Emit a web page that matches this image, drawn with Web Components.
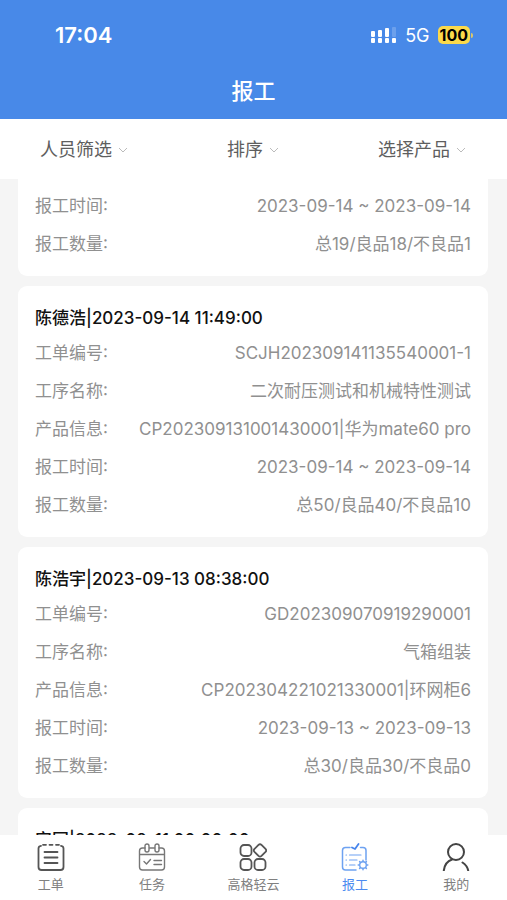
<!DOCTYPE html>
<html lang="zh-CN">
<head>
<meta charset="UTF-8">
<meta name="viewport" content="width=device-width, initial-scale=1.0">
<title>报工</title>
<style>
  :root {
    --blue: #4889e8;
    --page: #f5f5f5;
    --muted: #909090;
  }

  body {
    margin: 0;
    background: var(--page);
    font-family: Inter, "Noto Sans CJK SC", sans-serif;
  }
</style>
</head>
<body>
<report-app>
  <status-bar slot="top" time="17:04" network="5G" battery="100"></status-bar>
  <nav-title slot="top">报工</nav-title>

  <filter-bar slot="filters">
    <filter-select label="人员筛选"></filter-select>
    <filter-select label="排序"></filter-select>
    <filter-select label="选择产品"></filter-select>
  </filter-bar>

  <report-card continued>
    <report-row label="报工时间:">2023-09-14 ~ 2023-09-14</report-row>
    <report-row label="报工数量:">总19/良品18/不良品1</report-row>
  </report-card>

  <report-card heading="陈德浩|2023-09-14 11:49:00">
    <report-row label="工单编号:">SCJH202309141135540001-1</report-row>
    <report-row label="工序名称:">二次耐压测试和机械特性测试</report-row>
    <report-row label="产品信息:">CP202309131001430001|华为mate60 pro</report-row>
    <report-row label="报工时间:">2023-09-14 ~ 2023-09-14</report-row>
    <report-row label="报工数量:">总50/良品40/不良品10</report-row>
  </report-card>

  <report-card heading="陈浩宇|2023-09-13 08:38:00">
    <report-row label="工单编号:">GD202309070919290001</report-row>
    <report-row label="工序名称:">气箱组装</report-row>
    <report-row label="产品信息:">CP202304221021330001|环网柜6</report-row>
    <report-row label="报工时间:">2023-09-13 ~ 2023-09-13</report-row>
    <report-row label="报工数量:">总30/良品30/不良品0</report-row>
  </report-card>

  <report-card heading="安国|2023-09-11 00:00:00"></report-card>

  <tab-bar slot="tabs">
    <tab-item icon="order">工单</tab-item>
    <tab-item icon="task">任务</tab-item>
    <tab-item icon="apps">高格轻云</tab-item>
    <tab-item icon="report" active>报工</tab-item>
    <tab-item icon="user">我的</tab-item>
  </tab-bar>
</report-app>

<script>
const ICONS = {
  order: `
    <g stroke="#555" stroke-width="1.8">
      <path d="M4 2.8C2.4 3 1.5 3.8 1.5 5.5V24c0 2 1 3 3 3h19c2 0 3-1 3-3V5.5c0-1.7-.9-2.5-2.5-2.7"/>
      <path d="M6 1.8h3M12.500 1.800h3M19 1.800h3M7.500 9h13M7.500 14.500h13M7.500 20h13"/>
    </g>`,
  task: `
    <g stroke="#777" stroke-width="1.4">
      <path d="M7 5H4.500c-2 0-3 1-3 3v16c0 2 1 3 3 3h19c2 0 3-1 3-3V8c0-2-1-3-3-3H21M11.500 5h5M1.500 11.500h25"/>
      <rect x="7" y="1" width="4" height="8" rx="2"/>
      <rect x="17" y="1" width="4" height="8" rx="2"/>
      <path d="M6 18.500l2.500 2.500 4-4.500M16 17.500h7.500M16 21.500h7.500"/>
    </g>`,
  apps: `
    <g stroke="#555" stroke-width="1.8">
      <rect x="1.500" y="2" width="11" height="11" rx="3.500"/>
      <rect x="1.500" y="16" width="11" height="11" rx="3.500"/>
      <rect x="15.500" y="16" width="11" height="11" rx="3.500"/>
      <path d="M19.500 1.900q1.500-1.400 3 0l4 4q1.400 1.500 0 3l-4 4q-1.500 1.400-3 0l-4-4q-1.400-1.500 0-3z"/>
    </g>`,
  report: `
    <g stroke="#6ea2f1" stroke-width="1.5">
      <path d="M9 4.500H4.500c-2 0-3 1-3 3V24c0 2 1 3 3 3H15M19.500 4.500H22c2 0 3 1 3 3V17"/>
      <path d="M11 4.500l3 1.500L17.500 1" stroke="#4584ec" stroke-width="1.8"/>
      <path d="M5 12h.5M8.500 12H20M5 17h.5M8.500 17H16M5 22h.5M8.500 22H14" stroke-width="1.2"/>
      <circle cx="22" cy="22" r="3.300" stroke-width="1.4"/>
      <path d="M22 17.200v1M22 25.800v1M17.200 22h1M25.800 22h1M18.600 18.600l.7.7M24.700 24.700l.7.7M18.600 25.400l.7-.7M24.700 19.300l.7-.7"/>
    </g>`,
  user: `
    <g stroke="#444" stroke-width="2">
      <circle cx="14" cy="9" r="8"/>
      <path d="M10 16.500C5.500 18 2.500 22 1.800 27.500M20.500 19.500c3 2 5 4.500 5.700 8"/>
    </g>`
};

class ReportApp extends HTMLElement {
  constructor() {
    super();
    this.attachShadow({ mode: "open" });
  }

  connectedCallback() {
    this.shadowRoot.innerHTML = `
      <style>
        :host {
          display: flex;
          flex-direction: column;
          height: 100vh;
          background: var(--page);
        }

        header {
          background: var(--blue);
          color: #fff;
        }

        main {
          flex: 1;
          min-height: 0;
          display: flex;
          flex-direction: column;
          gap: 10px;
          padding: 0 19px 0 18px;
          overflow-y: auto;
          scrollbar-width: none;
        }
      </style>
      <header><slot name="top"></slot></header>
      <slot name="filters"></slot>
      <main><slot></slot></main>
      <slot name="tabs"></slot>
    `;
  }
}

class StatusBar extends HTMLElement {
  constructor() {
    super();
    this.attachShadow({ mode: "open" });
  }

  connectedCallback() {
    this.shadowRoot.innerHTML = `
      <style>
        :host {
          display: flex;
          align-items: center;
          justify-content: space-between;
          height: 70px;
          padding: 0 34px 0 55px;
        }

        .time {
          font-size: 22px;
          font-weight: 600;
        }

        .right {
          display: flex;
          align-items: center;
          gap: 8px;
          font-size: 18px;
        }

        svg {
          display: block;
        }

        .battery {
          display: flex;
          align-items: center;
          gap: 1px;
        }

        .level {
          padding: 0 2px;
          border-radius: 5px;
          background: #fbd94b;
          color: #000;
          font-size: 16px;
          font-weight: 700;
          line-height: 18px;
        }

        .cap {
          width: 2px;
          height: 5px;
          border-radius: 0 2px 2px 0;
          background: #d9c66c;
        }
      </style>
      <span class="time">${this.getAttribute("time")}</span>
      <span class="right">
        <svg width="26" height="18" viewBox="0 0 26 18" fill="#fff">
          <rect x="0" y="5" width="4" height="6" rx="1"/>
          <rect x="7" y="4" width="4" height="7" rx="1"/>
          <rect x="14" y="2" width="4" height="9" rx="1"/>
          <rect x="21" y="1" width="4" height="10" rx="1" opacity=".2"/>
          <rect x="0" y="12" width="4" height="5" rx="1"/>
          <rect x="7" y="12" width="4" height="5" rx="1"/>
          <rect x="14" y="12" width="4" height="5" rx="1"/>
          <rect x="21" y="12" width="4" height="5" rx="1"/>
        </svg>
        <span>${this.getAttribute("network")}</span>
        <span class="battery">
          <span class="level">${this.getAttribute("battery")}</span>
          <span class="cap"></span>
        </span>
      </span>
    `;
  }
}

class NavTitle extends HTMLElement {
  constructor() {
    super();
    this.attachShadow({ mode: "open" });
  }

  connectedCallback() {
    this.shadowRoot.innerHTML = `
      <style>
        :host {
          display: block;
        }

        h1 {
          margin: 0;
          padding: 5px 0 12px;
          font-size: 22px;
          font-weight: 500;
          line-height: 32px;
          text-align: center;
        }
      </style>
      <h1><slot></slot></h1>
    `;
  }
}

class FilterBar extends HTMLElement {
  constructor() {
    super();
    this.attachShadow({ mode: "open" });
  }

  connectedCallback() {
    this.shadowRoot.innerHTML = `
      <style>
        :host {
          display: flex;
          justify-content: space-between;
          align-items: center;
          height: 60px;
          padding: 0 41px 0 40px;
          background: #fff;
        }
      </style>
      <slot></slot>
    `;
  }
}

class FilterSelect extends HTMLElement {
  constructor() {
    super();
    this.attachShadow({ mode: "open" });
  }

  connectedCallback() {
    const label = this.getAttribute("label");
    this.shadowRoot.innerHTML = `
      <style>
        :host {
          display: block;
        }

        label {
          display: flex;
          align-items: center;
          gap: 6px;
          padding-top: 2px;
        }

        select {
          appearance: none;
          field-sizing: content;
          margin: 0;
          padding: 0;
          border: 0;
          background: none;
          color: #5e5e5e;
          font: inherit;
          font-size: 18px;
          line-height: 28px;
        }
      </style>
      <label>
        <select aria-label="${label}"><option>${label}</option></select>
        <svg width="10" height="8" viewBox="0 0 10 8" fill="none" stroke="#bbb">
          <path d="M1 2l4 4 4-4"/>
        </svg>
      </label>
    `;
  }
}

class ReportCard extends HTMLElement {
  constructor() {
    super();
    this.attachShadow({ mode: "open" });
  }

  connectedCallback() {
    const heading = this.getAttribute("heading");
    this.shadowRoot.innerHTML = `
      <style>
        :host {
          display: block;
          flex: none;
          padding: 16px 17px 13px;
          border-radius: 9px;
          background: #fff;
        }

        /* card whose upper part is already scrolled away */
        :host([continued]) {
          padding-top: 8px;
          border-radius: 0 0 9px 9px;
        }

        h2 {
          margin: 0;
          color: #111;
          font-size: 17px;
          font-weight: 500;
          font-feature-settings: "case";
          line-height: 32px;
        }
      </style>
      ${heading ? `<h2>${heading}</h2>` : ""}
      <slot></slot>
    `;
  }
}

class ReportRow extends HTMLElement {
  constructor() {
    super();
    this.attachShadow({ mode: "open" });
  }

  connectedCallback() {
    this.shadowRoot.innerHTML = `
      <style>
        :host {
          display: flex;
          justify-content: space-between;
          color: var(--muted);
          font-size: 17px;
          line-height: 38px;
          white-space: nowrap;
        }

        .label {
          font-feature-settings: "case";
        }
      </style>
      <span class="label">${this.getAttribute("label")}</span>
      <span><slot></slot></span>
    `;
  }
}

class TabBar extends HTMLElement {
  constructor() {
    super();
    this.attachShadow({ mode: "open" });
  }

  connectedCallback() {
    this.shadowRoot.innerHTML = `
      <style>
        :host {
          display: block;
          background: #fff;
        }

        nav {
          display: grid;
          grid-template-columns: repeat(5, 1fr);
          height: 65px;
        }
      </style>
      <nav><slot></slot></nav>
    `;
  }
}

class TabItem extends HTMLElement {
  constructor() {
    super();
    this.attachShadow({ mode: "open" });
  }

  connectedCallback() {
    this.shadowRoot.innerHTML = `
      <style>
        :host {
          display: block;
        }

        a {
          display: flex;
          flex-direction: column;
          align-items: center;
          gap: 3px;
          padding-top: 8px;
          color: #808080;
          font-size: 13px;
          line-height: 20px;
          text-decoration: none;
        }

        :host([active]) a {
          color: #4c8bf0;
        }
      </style>
      <a href="#${this.getAttribute("icon")}">
        <svg width="28" height="28" viewBox="0 0 28 28" fill="none" stroke-linecap="round" stroke-linejoin="round">
          ${ICONS[this.getAttribute("icon")]}
        </svg>
        <span><slot></slot></span>
      </a>
    `;
  }
}

customElements.define("report-app", ReportApp);
customElements.define("status-bar", StatusBar);
customElements.define("nav-title", NavTitle);
customElements.define("filter-bar", FilterBar);
customElements.define("filter-select", FilterSelect);
customElements.define("report-card", ReportCard);
customElements.define("report-row", ReportRow);
customElements.define("tab-bar", TabBar);
customElements.define("tab-item", TabItem);
</script>
</body>
</html>
